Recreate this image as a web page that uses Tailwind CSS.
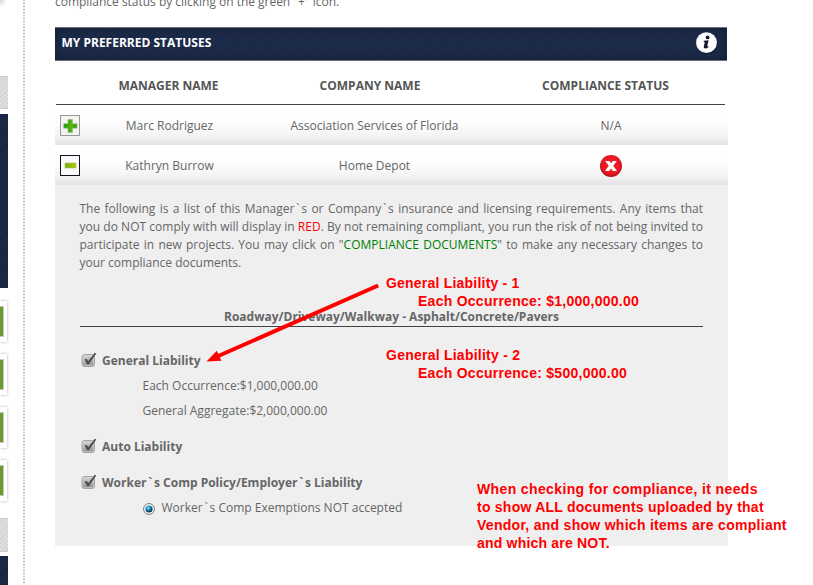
<!DOCTYPE html>
<html lang="en">
<head>
<meta charset="utf-8">
<title>My Preferred Statuses</title>
<script src="https://cdn.jsdelivr.net/npm/@tailwindcss/browser@4"></script>
</head>
<body class="bg-white">
<svg class="absolute w-0 h-0" aria-hidden="true">
  <defs>
    <linearGradient id="box" x1="0" y1="0" x2="0" y2="1"><stop offset="0" stop-color="#dadada"/><stop offset="1" stop-color="#8a8a8a"/></linearGradient>
    <linearGradient id="plus" x1="0" y1="0" x2="1" y2="0"><stop offset="0" stop-color="#1b9a08"/><stop offset=".6" stop-color="#5cb50c"/><stop offset="1" stop-color="#2f9a0a"/></linearGradient>
    <linearGradient id="minus" x1="0" y1="0" x2="1" y2="0"><stop offset="0" stop-color="#6fae10"/><stop offset="1" stop-color="#b4c800"/></linearGradient>
    <radialGradient id="red" cx=".5" cy=".45" r=".55"><stop offset="0" stop-color="#f5232d"/><stop offset=".75" stop-color="#e81722"/><stop offset="1" stop-color="#a90c14"/></radialGradient>
    <radialGradient id="radio" cx=".4" cy=".35" r=".65"><stop offset="0" stop-color="#7fe4ff"/><stop offset=".4" stop-color="#1b96cf"/><stop offset="1" stop-color="#06263f"/></radialGradient>
    <symbol id="check" viewBox="0 0 16 16">
      <rect x="1" y="2.500" width="12.500" height="12" rx="2.800" fill="url(#box)" stroke="#a0a0a0"/>
      <rect x="2" y="3.500" width="10.500" height="10" rx="1.500" fill="none" stroke="#d8d8d8" stroke-opacity=".6"/>
      <path d="M3.600 7.200 5.800 6.900 7.200 9.300 13.800 .8 15.300 1.400 7.700 12.300 6.300 12.300Z" fill="#4a4a4a"/>
    </symbol>
  </defs>
</svg>
<div class="relative flex w-[813px] h-[585px] overflow-hidden bg-white font-['Open_Sans','Noto_Sans',sans-serif] text-[12px] leading-[18px] text-[#666]">
  <aside class="w-[8px] shrink-0 flex flex-col">
    <div class="h-[8px] w-[5px] bg-[radial-gradient(circle_at_0_0,#d8d8d8,#fff_80%)]"></div>
    <div class="mt-[68px] h-[33px] shrink-0 border-y border-[#ccc] bg-[repeating-linear-gradient(135deg,#dedede_0px,#dedede_2px,#d0d0d0_2px,#d0d0d0_3px)]"></div>
    <div class="mt-[5px] h-[174px] shrink-0 bg-[repeating-linear-gradient(135deg,#1c2a48_0px,#1c2a48_2px,#17233e_2px,#17233e_3px)]"></div>
    <div class="mt-[13px] flex flex-col gap-[12px]">
      <div class="w-[7px] h-[41px] py-[5px] bg-white shadow-[0_0_3px_#aaa]"><div class="w-[4px] h-[31px] bg-[#6b9a2d] border-y border-r border-[#c4c9bd]"></div></div>
      <div class="w-[7px] h-[41px] py-[5px] bg-white shadow-[0_0_3px_#aaa]"><div class="w-[4px] h-[31px] bg-[#6b9a2d] border-y border-r border-[#c4c9bd]"></div></div>
      <div class="w-[7px] h-[41px] py-[5px] bg-white shadow-[0_0_3px_#aaa]"><div class="w-[4px] h-[31px] bg-[#6b9a2d] border-y border-r border-[#c4c9bd]"></div></div>
      <div class="w-[7px] h-[41px] py-[5px] bg-white shadow-[0_0_3px_#aaa]"><div class="w-[4px] h-[31px] bg-[#6b9a2d] border-y border-r border-[#c4c9bd]"></div></div>
    </div>
    <div class="mt-[17px] h-[34px] shrink-0 border-y border-[#ccc] bg-[repeating-linear-gradient(135deg,#dedede_0px,#dedede_2px,#d0d0d0_2px,#d0d0d0_3px)]"></div>
    <div class="mt-[4px] h-[29px] shrink-0 bg-[repeating-linear-gradient(135deg,#1c2a48_0px,#1c2a48_2px,#17233e_2px,#17233e_3px)]"></div>
  </aside>
  <div class="ml-[15px] w-[2px] shrink-0 bg-[repeating-linear-gradient(180deg,#bdbdbd_0px,#bdbdbd_1px,#f0f0f0_1px,#f0f0f0_3px)]"></div>
  <main class="ml-[30px] w-[673px] shrink-0">
    <p class="-mt-[7px] h-[34px] whitespace-pre tracking-[-0.02px]">compliance status by clicking on the green "+" icon.</p>
    <header class="flex w-[672px] h-[34px] items-center justify-between border-y border-[#687182] pl-[6.500px] pr-[9px] pb-[3px] bg-[repeating-linear-gradient(135deg,#1e2d4c_0px,#1e2d4c_2px,#192743_2px,#192743_3px)] shadow-[inset_0_0_12px_#131d30]">
      <h1 class="font-bold text-white">MY PREFERRED STATUSES</h1>
      <svg class="w-[23px] h-[23px]" viewBox="0 0 23 23"><circle cx="12" cy="12.300" r="10.500" fill="#0b1220"/><circle cx="11.500" cy="11.700" r="10.400" fill="#fff"/><circle cx="12.600" cy="6.400" r="1.900" fill="#10182a"/><path d="M8.900 9.700 13.600 9.300 12.100 15.400 13.500 14.900 13.300 16.200C11.500 17.900 8.300 17.900 8.800 15.400L9.800 11.200 8.600 10.900Z" fill="#10182a"/></svg>
    </header>
    <div class="ml-[1px] w-[669px] h-[44px] grid grid-cols-[24px_177px_226px_242px] items-center border-b border-[#444] pt-[6px] font-bold text-center text-[#555]">
      <span></span><span>MANAGER NAME</span><span>COMPANY NAME</span><span class="pl-[3px]">COMPLIANCE STATUS</span>
    </div>
    <div class="h-[40px] grid grid-cols-[25px_179px_231px_242px] items-center text-center bg-[linear-gradient(180deg,#fff_0%,#fdfdfd_45%,#f4f4f5_75%,#e2e2e4_100%)]">
      <svg class="ml-[5px] w-[20px] h-[21px]" viewBox="0 0 20 21"><rect x=".5" y=".5" width="19" height="20" fill="#f3f3f3" stroke="#999"/><path d="M8 4.500h4.500v4.200H17v4.500h-4.500v4.300H8v-4.300H3.700V8.700H8Z" fill="url(#plus)" stroke="#8fbf7a" stroke-width=".6"/></svg>
      <span class="pt-[2px]">Marc Rodriguez</span><span class="pt-[2px]">Association Services of Florida</span><span class="pt-[2px]">N/A</span>
    </div>
    <div class="h-[40px] grid grid-cols-[25px_179px_231px_242px] items-center text-center bg-[linear-gradient(180deg,#fff_0%,#fdfdfd_45%,#f4f4f5_75%,#e2e2e4_100%)]">
      <svg class="ml-[5px] w-[20px] h-[21px]" viewBox="0 0 20 21"><rect x=".5" y=".5" width="19" height="20" fill="#fafafa" stroke="#0d1524"/><rect x="5" y="8" width="11" height="5" fill="url(#minus)" stroke="#a9bb6a" stroke-width=".6"/></svg>
      <span class="pt-[2px]">Kathryn Burrow</span><span class="pt-[2px]">Home Depot</span>
      <svg class="justify-self-center mt-[2px] w-[22px] h-[22px]" viewBox="0 0 22 22"><circle cx="11" cy="11" r="11" fill="url(#red)"/><path d="M5.200 6H9.300L11 8.200 12.900 6H16.800L13.200 10.800 17 16H12.800L11 13.400 9.100 16H5L8.800 10.800Z" fill="#fff"/></svg>
    </div>
    <section class="h-[361px] bg-[#efefef] pl-[24px] pr-[25px] pt-[15px]">
      <p class="text-justify w-[624px] pl-[0.500px]">The following is a list of this Manager<span class="px-[1.800px]">`</span>s or Company<span class="px-[1.800px]">`</span>s insurance and licensing requirements. Any items that<br class="hidden"> you do NOT comply with will display in <span class="text-[#f00]">RED</span>. By not remaining compliant, you run the risk of not being invited to participate in new projects. You may click on "<span class="text-[#008000]">COMPLIANCE DOCUMENTS</span>" to make any necessary changes to your compliance documents.</p>
      <h2 class="mt-[36px] ml-[1px] h-[19px] w-[623px] border-b border-[#444] text-center font-bold">Roadway/Driveway/Walkway - Asphalt/Concrete/Pavers</h2>
      <div class="mt-[25px] flex gap-[5px]"><svg class="ml-[2px] w-[16px] h-[16px]"><use href="#check"/></svg><b>General Liability</b></div>
      <p class="mt-[7px] ml-[63.500px]">Each Occurrence:$1,000,000.00</p>
      <p class="mt-[7px] ml-[63.500px]">General Aggregate:$2,000,000.00</p>
      <div class="mt-[18px] flex gap-[5px]"><svg class="ml-[2px] w-[16px] h-[16px]"><use href="#check"/></svg><b>Auto Liability</b></div>
      <div class="mt-[18px] flex gap-[5px]"><svg class="ml-[2px] w-[16px] h-[16px]"><use href="#check"/></svg><b>Worker<span class="px-[1.600px]">`</span>s Comp Policy/Employer<span class="px-[1.600px]">`</span>s Liability</b></div>
      <div class="mt-[7px] ml-[64px] flex gap-[6.500px]"><svg class="mt-[4px] w-[12px] h-[12px]" viewBox="0 0 12 12"><circle cx="6" cy="6" r="5.400" fill="#fff" stroke="#777"/><circle cx="6" cy="6" r="3.600" fill="url(#radio)"/></svg><span>Worker<span class="px-[1.800px]">`</span>s Comp Exemptions NOT accepted</span></div>
    </section>
  </main>
  <svg class="absolute left-[200px] top-[275px] w-[190px] h-[95px]" viewBox="0 0 190 95"><path d="M178.200 10.500 16 82" stroke="#f00" stroke-width="4" fill="none"/><path d="M6.500 86.500 16.800 75.800 21.400 85.800Z" fill="#f00"/></svg>
  <div class="absolute left-[386px] top-[274px] font-['Liberation_Sans',Arial,sans-serif] font-bold text-[14px] leading-[18px] text-[#f00] whitespace-nowrap"><p class="tracking-[0.210px]">General Liability - 1</p><p class="pl-[32px] tracking-[0.260px]">Each Occurrence: $1,000,000.00</p></div>
  <div class="absolute left-[386px] top-[346px] font-['Liberation_Sans',Arial,sans-serif] font-bold text-[14px] leading-[18px] text-[#f00] whitespace-nowrap"><p class="tracking-[0.240px]">General Liability - 2</p><p class="pl-[32px] tracking-[0.270px]">Each Occurrence: $500,000.00</p></div>
  <div class="absolute left-[477px] top-[480px] font-['Liberation_Sans',Arial,sans-serif] font-bold text-[14px] leading-[18px] text-[#f00] whitespace-nowrap"><p class="tracking-[0.370px]">When checking for compliance, it needs</p><p class="tracking-[0.240px]">to show ALL documents uploaded by that</p><p class="tracking-[0.280px]">Vendor, and show which items are compliant</p><p class="tracking-[0.200px]">and which are NOT.</p></div>
</div>
</body>
</html>
